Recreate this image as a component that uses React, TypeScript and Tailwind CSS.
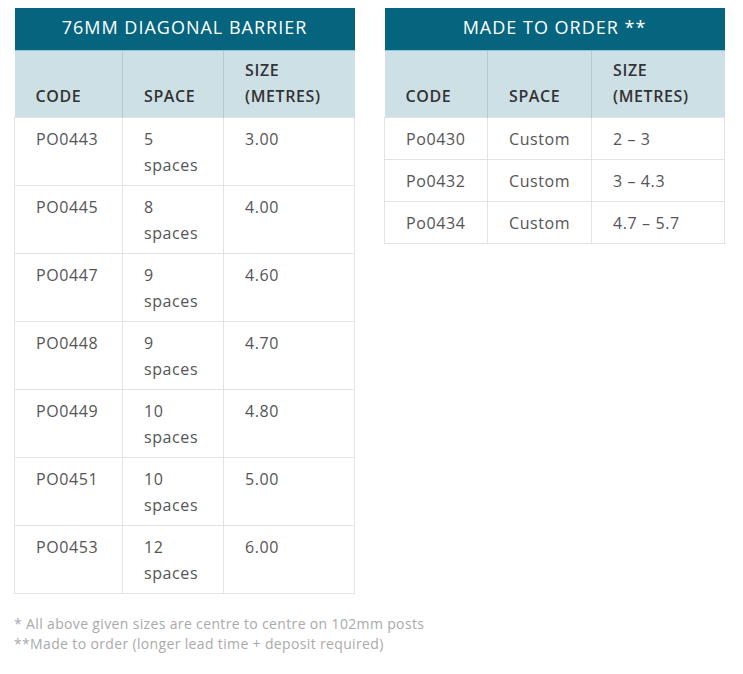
type Row = [string, string, string];

const diagonal: Row[] = [
  ["PO0443", "5 spaces", "3.00"],
  ["PO0445", "8 spaces", "4.00"],
  ["PO0447", "9 spaces", "4.60"],
  ["PO0448", "9 spaces", "4.70"],
  ["PO0449", "10 spaces", "4.80"],
  ["PO0451", "10 spaces", "5.00"],
  ["PO0453", "12 spaces", "6.00"],
];

const custom: Row[] = [
  ["Po0430", "Custom", "2 – 3"],
  ["Po0432", "Custom", "3 – 4.3"],
  ["Po0434", "Custom", "4.7 – 5.7"],
];

function PriceTable({ title, rows, widths, wrap }: { title: string; rows: Row[]; widths: string[]; wrap?: boolean }) {
  return (
    <table className="w-[340px] border-collapse table-fixed text-[16px] leading-[26px] tracking-[0.6px]">
      <colgroup>
        {widths.map((w, i) => (
          <col key={i} className={w} />
        ))}
      </colgroup>
      <thead>
        <tr>
          <th colSpan={3} className="h-[42px] pb-[3px] bg-[#05657f] text-white text-[18px] font-medium tracking-[1px] border-b border-[#8fc6d4]">
            {title}
          </th>
        </tr>
        <tr className="bg-[#cde0e6] text-[#333]">
          <th className="h-[67px] align-bottom px-[21px] pb-[8px] border-r border-[#b3cbd2] font-semibold text-left">CODE</th>
          <th className="align-bottom px-[21px] pb-[8px] border-r border-[#b3cbd2] font-semibold text-left">SPACE</th>
          <th className="align-bottom px-[21px] pb-[8px] font-semibold text-left">
            SIZE
            <br />
            (METRES)
          </th>
        </tr>
      </thead>
      <tbody className="text-[#555]">
        {rows.map((r) => (
          <tr key={r[0]}>
            {r.map((c, i) => (
              <td
                key={i}
                className={`border border-[#e3e3e3] px-[21px] pt-[8px] pb-[7px] align-top ${wrap ? "h-[67px]" : "h-[41px]"}`}
              >
                {wrap && i === 1 ? (
                  <>
                    {c.split(" ")[0]}
                    <br />
                    {c.split(" ")[1]}
                  </>
                ) : (
                  c
                )}
              </td>
            ))}
          </tr>
        ))}
      </tbody>
    </table>
  );
}

export default function App() {
  return (
    <div className="bg-white w-[743px] h-[674px] pt-[8px] px-[14px]" style={{ fontFamily: '"Open Sans", "Liberation Sans", sans-serif' }}>
      <div className="flex gap-[29px] items-start">
        <PriceTable title="76MM DIAGONAL BARRIER" rows={diagonal} widths={["w-[108px]", "w-[101px]", "w-[131px]"]} wrap />
        <PriceTable title="MADE TO ORDER **" rows={custom} widths={["w-[103px]", "w-[104px]", "w-[133px]"]} />
      </div>
      <div className="mt-[20px] text-[14px] leading-[20px] tracking-[0.35px] text-[#aaa]">
        <p>* All above given sizes are centre to centre on 102mm posts</p>
        <p>**Made to order (longer lead time + deposit required)</p>
      </div>
    </div>
  );
}
